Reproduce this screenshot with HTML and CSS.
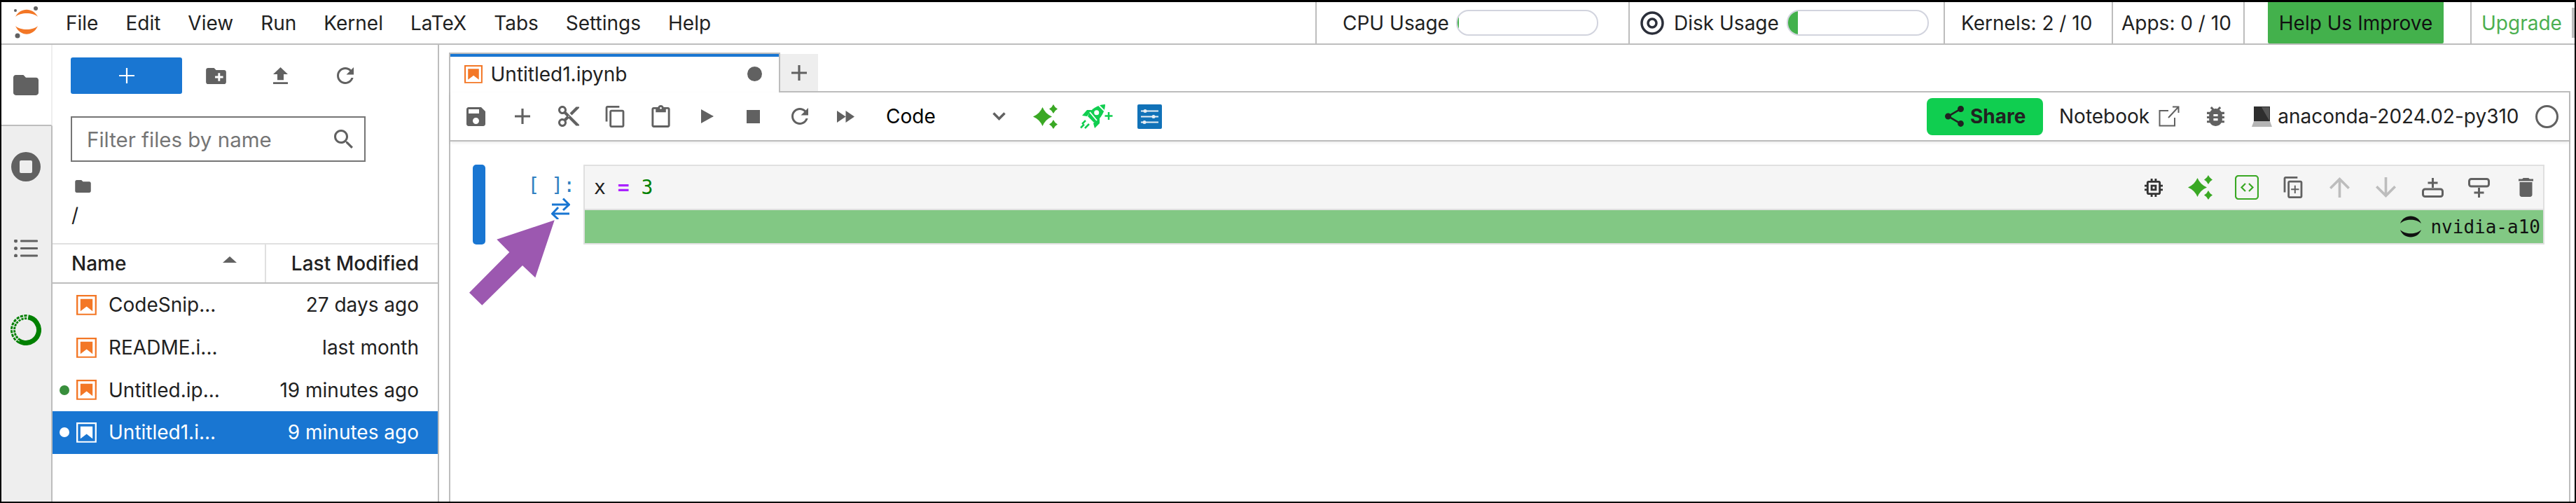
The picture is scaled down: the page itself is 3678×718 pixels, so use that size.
FILE: index.html
```html
<!DOCTYPE html>
<html lang="en">
<head>
<meta charset="utf-8">
<title>JupyterLab</title>
<link rel="stylesheet" href="styles.css">
</head>
<body>
<div class="app">
  <header class="topbar">
    <svg class="logo" viewBox="18 8 44 48"><path class="orange" d="M22 24C29 10.300 47 10.300 54 24C47 17.300 29 17.300 22 24Z"/><path class="orange" d="M22 37C29 52.700 47 52.700 54 37C47 43.700 29 43.700 22 37Z"/><circle class="grey" cx="22" cy="15" r="2"/><circle class="grey" cx="51" cy="12" r="3"/><circle class="grey" cx="25" cy="51" r="3.500"/></svg>
    <nav class="menu"><span>File</span><span>Edit</span><span>View</span><span>Run</span><span>Kernel</span><span>LaTeX</span><span>Tabs</span><span>Settings</span><span>Help</span></nav>
    <div class="status s-cpu"><span>CPU Usage</span><div class="meter"><div class="fill" style="width:2px"></div></div></div>
    <div class="status s-disk"><svg class="disk" viewBox="0 0 34 34"><circle cx="17" cy="17" r="15" /><circle cx="17" cy="17" r="6"/></svg><span>Disk Usage</span><div class="meter"><div class="fill" style="width:14px"></div></div></div>
    <div class="status s-kern"><span>Kernels: 2 / 10</span></div>
    <div class="status s-apps"><span>Apps: 0 / 10</span></div>
    <div class="status s-help"><span class="help-btn">Help Us Improve</span></div>
    <div class="status s-up"><span class="upgrade">Upgrade</span><i class="scroll"></i></div>
  </header>
  <div class="workspace">
    <aside class="rail">
      <div class="rail-tab active"><svg class="r-folder" viewBox="2 4 20 16"><path d="M10 4H4c-1.100 0-2 .9-2 2v12c0 1.100.9 2 2 2h16c1.100 0 2-.9 2-2V8c0-1.100-.9-2-2-2h-8l-2-2z"/></svg></div>
      <div class="rail-tab"><svg class="r-stop" viewBox="0 0 42 42"><path fill-rule="evenodd" d="M21 0a21 21 0 1 0 0 42a21 21 0 1 0 0-42ZM14 12h14a2 2 0 0 1 2 2v14a2 2 0 0 1-2 2H14a2 2 0 0 1-2-2V14a2 2 0 0 1 2-2Z"/></svg></div>
      <div class="rail-tab"><svg class="r-toc" viewBox="0 0 34 25"><circle cx="2.500" cy="2" r="2.500"/><circle cx="2.500" cy="12.500" r="2.500"/><circle cx="2.500" cy="23" r="2.500"/><rect x="9" y=".5" width="25" height="3" rx="1"/><rect x="9" y="11" width="25" height="3" rx="1"/><rect x="9" y="21.500" width="25" height="3" rx="1"/></svg></div>
      <div class="rail-tab"><svg class="r-ana" viewBox="0 0 44 44"><circle class="ring-solid" cx="22" cy="22" r="18.500" pathLength="100" transform="rotate(-80 22 22)"/><circle class="ring-hatch" cx="22" cy="22" r="18.500" pathLength="100" transform="rotate(120 22 22)"/><circle class="ring-hatch2" cx="22" cy="22" r="18.500" pathLength="100" transform="rotate(120 22 22)"/></svg></div>
    </aside>
    <section class="files">
      <div class="f-tools">
        <div class="new-btn"><svg class="new-plus" viewBox="5 5 14 14"><path d="M19 12.700h-6.300V19h-1.400v-6.300H5v-1.400h6.300V5h1.400v6.300H19z"/></svg></div>
        <div class="f-slot"><svg class="i-newfolder" viewBox="2 4 20 16"><path d="M20 6h-8l-2-2H4c-1.110 0-2 .89-2 2v12c0 1.100.89 2 2 2h16c1.100 0 2-.9 2-2V8c0-1.100-.9-2-2-2zm-1 8h-3v3h-2v-3h-3v-2h3V9h2v3h3v2z"/></svg></div>
        <div class="f-slot"><svg class="i-upload" viewBox="5 3 14 17" preserveAspectRatio="none"><path d="M9 16h6v-6h4l-7-7-7 7h4zm-4 2h14v2H5z"/></svg></div>
        <div class="f-slot"><svg class="i-refresh" viewBox="4 4 16 16"><path d="M17.650 6.350C16.200 4.900 14.210 4 12 4c-4.420 0-7.990 3.580-7.990 8s3.570 8 7.990 8c3.730 0 6.840-2.550 7.730-6h-2.080c-.82 2.330-3.040 4-5.650 4-3.310 0-6-2.690-6-6s2.690-6 6-6c1.660 0 3.140.69 4.220 1.780L13 11h7V4l-2.350 2.350z"/></svg></div>
      </div>
      <div class="filter"><span>Filter files by name</span><svg class="i-search" viewBox="3 3 17.500 17.500"><path d="M15.500 14h-.79l-.28-.27C15.410 12.590 16 11.110 16 9.500 16 5.910 13.090 3 9.500 3S3 5.910 3 9.500 5.910 16 9.500 16c1.610 0 3.090-.59 4.230-1.570l.27.28v.79l5 4.990L20.490 19l-4.990-5zm-6 0C7.010 14 5 11.990 5 9.500S7.010 5 9.500 5 14 7.010 14 9.500 11.990 14 9.500 14z"/></svg></div>
      <div class="crumbs"><svg class="i-crumb" viewBox="2 4 20 16"><path d="M10 4H4c-1.100 0-2 .9-2 2v12c0 1.100.9 2 2 2h16c1.100 0 2-.9 2-2V8c0-1.100-.9-2-2-2h-8l-2-2z"/></svg><div class="slash">/</div></div>
      <div class="f-head"><div class="h-name"><span>Name</span><svg class="caret" viewBox="0 0 20 9"><path d="M10 0l10 9H0z"/></svg></div><div class="h-mod">Last Modified</div></div>
      <div class="f-list">
        <div class="row"><i class="dot none"></i><svg class="nb" viewBox="1.800 1.800 18.400 18.400"><path d="M18.700 3.300v15.400H3.300V3.300h15.400m1.500-1.500H1.800v18.300h18.300l.1-18.300z"/><path d="M16.500 16.500l-5.400-4.300-5.600 4.300v-11h11z"/></svg><span class="r-name">CodeSnip...</span><span class="r-mod">27 days ago</span></div>
        <div class="row"><i class="dot none"></i><svg class="nb" viewBox="1.800 1.800 18.400 18.400"><path d="M18.700 3.300v15.400H3.300V3.300h15.400m1.500-1.500H1.800v18.300h18.300l.1-18.300z"/><path d="M16.500 16.500l-5.400-4.300-5.600 4.300v-11h11z"/></svg><span class="r-name">README.i...</span><span class="r-mod">last month</span></div>
        <div class="row"><i class="dot"></i><svg class="nb" viewBox="1.800 1.800 18.400 18.400"><path d="M18.700 3.300v15.400H3.300V3.300h15.400m1.500-1.500H1.800v18.300h18.300l.1-18.300z"/><path d="M16.500 16.500l-5.400-4.300-5.600 4.300v-11h11z"/></svg><span class="r-name">Untitled.ip...</span><span class="r-mod">19 minutes ago</span></div>
        <div class="row selected"><i class="dot"></i><svg class="nb" viewBox="1.800 1.800 18.400 18.400"><path d="M18.700 3.300v15.400H3.300V3.300h15.400m1.500-1.500H1.800v18.300h18.300l.1-18.300z"/><path d="M16.500 16.500l-5.400-4.300-5.600 4.300v-11h11z"/></svg><span class="r-name">Untitled1.i...</span><span class="r-mod">9 minutes ago</span></div>
      </div>
    </section>
    <main class="main">
      <div class="tabs">
        <div class="tab"><svg class="nb tab-nb" viewBox="1.800 1.800 18.400 18.400"><path d="M18.700 3.300v15.400H3.300V3.300h15.400m1.500-1.500H1.800v18.300h18.300l.1-18.300z"/><path d="M16.500 16.500l-5.400-4.300-5.600 4.300v-11h11z"/></svg><span class="tab-label">Untitled1.ipynb</span><i class="tab-dot"></i></div>
        <div class="tab-add"><svg class="i-plus" viewBox="5 5 14 14"><path d="M19 13h-6v6h-2v-6H5v-2h6V5h2v6h6v2z"/></svg></div>
        <div class="tab-fill"></div>
      </div>
      <div class="panel">
        <div class="nb-tools">
          <div class="t-slot"><svg class="i-27" viewBox="3 3 18 18"><path d="M17 3H5c-1.110 0-2 .9-2 2v14c0 1.100.89 2 2 2h14c1.100 0 2-.9 2-2V7l-4-4zm-5 16c-1.660 0-3-1.340-3-3s1.340-3 3-3 3 1.340 3 3-1.340 3-3 3zm3-10H5V5h10v4z"/></svg></div>
          <div class="t-slot"><svg class="i-plus" viewBox="5 5 14 14"><path d="M19 13h-6v6h-2v-6H5v-2h6V5h2v6h6v2z"/></svg></div>
          <div class="t-slot"><svg class="i-30" viewBox="2 2 20 20"><path d="M9.640 7.640c.23-.5.36-1.050.36-1.640 0-2.210-1.790-4-4-4S2 3.790 2 6s1.790 4 4 4c.59 0 1.140-.13 1.640-.36L10 12l-2.360 2.360C7.140 14.130 6.590 14 6 14c-2.210 0-4 1.790-4 4s1.790 4 4 4 4-1.790 4-4c0-.59-.13-1.140-.36-1.640L12 14l7 7h3v-1L9.640 7.640zM6 8c-1.100 0-2-.89-2-2s.9-2 2-2 2 .89 2 2-.9 2-2 2zm0 12c-1.100 0-2-.89-2-2s.9-2 2-2 2 .89 2 2-.9 2-2 2zm6-7.500c-.28 0-.5-.22-.5-.5s.22-.5.5-.5.5.22.5.5-.22.5-.5.5zM19 3l-6 6 2 2 7-7V3z"/></svg></div>
          <div class="t-slot"><svg class="i-copy" viewBox="2 1 19 22"><path d="M16 1H4c-1.100 0-2 .9-2 2v14h2V3h12V1zm3 4H8c-1.100 0-2 .9-2 2v14c0 1.100.9 2 2 2h11c1.100 0 2-.9 2-2V7c0-1.100-.9-2-2-2zm0 16H8V7h11v14z"/></svg></div>
          <div class="t-slot"><svg class="i-paste" viewBox="3 0 18 22"><path d="M19 2h-4.180C14.400.84 13.300 0 12 0c-1.300 0-2.400.84-2.820 2H5c-1.100 0-2 .9-2 2v16c0 1.100.9 2 2 2h14c1.100 0 2-.9 2-2V4c0-1.100-.9-2-2-2zm-7 0c.55 0 1 .45 1 1s-.45 1-1 1-1-.45-1-1 .45-1 1-1zm7 18H5V4h2v3h10V4h2v16z"/></svg></div>
          <div class="t-slot"><svg class="i-run" viewBox="0 0 18 20"><path d="M0 0l18 10L0 20z"/></svg></div>
          <div class="t-slot"><svg class="i-stop" viewBox="0 0 19 19"><path d="M0 0h19v19H0z"/></svg></div>
          <div class="t-slot"><svg class="i-refresh" viewBox="4 4 16 16"><path d="M17.650 6.350C16.200 4.900 14.210 4 12 4c-4.420 0-7.990 3.580-7.990 8s3.570 8 7.990 8c3.730 0 6.840-2.550 7.730-6h-2.080c-.82 2.330-3.040 4-5.650 4-3.310 0-6-2.690-6-6s2.690-6 6-6c1.660 0 3.140.69 4.220 1.780L13 11h7V4l-2.350 2.350z"/></svg></div>
          <div class="t-slot"><svg class="i-ff" viewBox="0 0 25 17"><path d="M0 0l12.500 8.500L0 17zM12.500 0L25 8.500 12.500 17z"/></svg></div>
          <div class="select"><span>Code</span><svg class="chev" viewBox="0 0 19 12"><path d="M1.500 1.500l8 8 8-8"/></svg></div>
          <svg class="sparkle" viewBox="0 0 35 35"><path d="M13.500 4Q17.500 13.500 27 17.500Q17.500 21.500 13.500 31Q9.500 21.500 0 17.500Q9.500 13.500 13.500 4Z"/><path d="M29 0Q30.800 4.200 35 6.500Q30.800 8.800 29 13Q27.200 8.800 23 6.500Q27.200 4.200 29 0Z"/><path d="M29 22Q30.800 26.200 35 28.500Q30.800 30.800 29 35Q27.200 30.800 23 28.500Q27.200 26.200 29 22Z"/></svg>
          <svg class="rocket" viewBox="0 0 48 35"><path d="M36 0C28 0 20 4 14 11L11 17L20 26L26 22C32 16 36 8 36 0Z"/><path d="M3 16L10 8H17L10 17Z"/><path d="M21 34L28 27V19L19 27Z"/><circle class="hole" cx="23.700" cy="11.700" r="3.500"/><path class="white" d="M27 1.500L34.500 9M14 11L24 23" /><path class="line" d="M1 33.500L6 28.500M7 34L13 28M3 28L8 23"/><path class="line" d="M35.500 16.500h11M41 11v11"/></svg>
          <svg class="tune" viewBox="0 0 35 35"><rect width="35" height="35" rx="2"/><path class="tl" d="M5 9.500H30M5 17.500H30M5 25.500H30"/><circle cx="11" cy="9.500" r="2.500"/><circle cx="23" cy="17.500" r="2.500"/><circle cx="10" cy="25.500" r="2.500"/></svg>
          <div class="share"><svg class="i-share" viewBox="3 2 18 20"><path d="M18 16.080c-.76 0-1.440.3-1.960.77L8.910 12.700c.05-.23.09-.46.09-.7s-.04-.47-.09-.7l7.050-4.110c.54.5 1.250.81 2.040.81 1.660 0 3-1.340 3-3s-1.340-3-3-3-3 1.340-3 3c0 .24.04.47.09.7L8.040 9.810C7.500 9.310 6.790 9 6 9c-1.660 0-3 1.340-3 3s1.340 3 3 3c.79 0 1.500-.31 2.040-.81l7.120 4.160c-.05.21-.08.43-.08.65 0 1.610 1.310 2.920 2.920 2.920 1.610 0 2.920-1.310 2.920-2.920s-1.310-2.920-2.920-2.920z"/></svg><span>Share</span></div>
          <span class="nb-link">Notebook</span>
          <svg class="ext" viewBox="0 0 30 30"><path d="M14 7H1.500V28.500H23V17M14 17L28.500 1.500M20 1.500H28.500V10"/></svg>
          <svg class="bug" viewBox="4 3 16 18"><path d="M20 8h-2.810c-.45-.78-1.070-1.450-1.820-1.960L17 4.410 15.590 3l-2.170 2.170C12.960 5.060 12.490 5 12 5c-.49 0-.96.06-1.410.17L8.410 3 7 4.410l1.620 1.630C7.880 6.550 7.260 7.220 6.810 8H4v2h2.090c-.05.33-.09.66-.09 1v1H4v2h2v1c0 .34.04.67.09 1H4v2h2.810c1.040 1.790 2.970 3 5.190 3s4.150-1.210 5.190-3H20v-2h-2.090c.05-.33.09-.66.09-1v-1h2v-2h-2v-1c0-.34-.04-.67-.09-1H20V8zm-6 8h-4v-2h4v2zm0-4h-4v-2h4v2z"/></svg>
          <svg class="laptop" viewBox="0 0 29 29"><path class="scr" d="M3 0H26V21H3Z"/><path class="sheen" d="M14 1H25V20Z"/><path class="base" d="M3 21H26L29 29H0Z"/></svg>
          <span class="kernel">anaconda-2024.02-py310</span>
          <i class="k-circle"></i>
        </div>
        <div class="cell">
          <div class="collapser"></div>
          <div class="prompt"><span>[ ]:</span><svg class="swap" viewBox="0 0 27 31"><path d="M1 10H25M17 1.500L25.500 10L17 18M26 23H2M10 14L1.500 23L10 31"/></svg></div>
          <div class="cell-body">
            <div class="editor">
              <code class="code">x <b class="op">=</b> <b class="num">3</b></code>
              <div class="cell-tools">
                <div class="c-slot"><svg class="i-chip" viewBox="3 3 18 18"><path d="M15 9H9v6h6V9zm-2 4h-2v-2h2v2zm8-2V9h-2V7c0-1.100-.9-2-2-2h-2V3h-2v2h-2V3H9v2H7c-1.100 0-2 .9-2 2v2H3v2h2v2H3v2h2v2c0 1.100.9 2 2 2h2v2h2v-2h2v2h2v-2h2c1.100 0 2-.9 2-2v-2h2v-2h-2v-2h2zm-4 6H7V7h10v10z"/></svg></div>
                <div class="c-slot"><svg class="sparkle" viewBox="0 0 35 35"><path d="M13.500 4Q17.500 13.500 27 17.500Q17.500 21.500 13.500 31Q9.500 21.500 0 17.500Q9.500 13.500 13.500 4Z"/><path d="M29 0Q30.800 4.200 35 6.500Q30.800 8.800 29 13Q27.200 8.800 23 6.500Q27.200 4.200 29 0Z"/><path d="M29 22Q30.800 26.200 35 28.500Q30.800 30.800 29 35Q27.200 30.800 23 28.500Q27.200 26.200 29 22Z"/></svg></div>
                <div class="c-slot"><svg class="codebox" viewBox="0 0 34 35"><rect x="1" y="1" width="32" height="33" rx="4"/><path d="M15 12L9.500 17.500L15 23M20 12L25.500 17.500L20 23"/></svg></div>
                <div class="c-slot"><svg class="i-copy" viewBox="2 1 19 22"><path d="M16 1H4c-1.100 0-2 .9-2 2v14h2V3h12V1zm3 4H8c-1.100 0-2 .9-2 2v14c0 1.100.9 2 2 2h11c1.100 0 2-.9 2-2V7c0-1.100-.9-2-2-2zm0 16H8V7h11v14zM12.800 10h1.400v3.300h3.300v1.400h-3.300V18h-1.400v-3.300H9.500v-1.400h3.300z"/></svg></div>
                <div class="c-slot disabled"><svg class="i-arrow" viewBox="4 4 16 16"><path d="M4 12l1.410 1.410L11 7.830V20h2V7.830l5.580 5.590L20 12l-8-8-8 8z"/></svg></div>
                <div class="c-slot disabled"><svg class="i-arrow" viewBox="4 4 16 16"><path d="M20 12l-1.410-1.410L13 16.170V4h-2v12.170l-5.580-5.590L4 12l8 8 8-8z"/></svg></div>
                <div class="c-slot"><svg class="i-ins" viewBox="0 0 31 28"><rect class="ins-box" x="1.500" y="16" width="28" height="10.500" rx="3"/><path class="ins-plus" d="M15.500 0v14M8.500 7h14"/></svg></div>
                <div class="c-slot"><svg class="i-ins" viewBox="0 0 31 28"><rect class="ins-box" x="1.500" y="1.500" width="28" height="10.500" rx="3"/><path class="ins-plus" d="M15.500 14v14M8.500 21h14"/></svg></div>
                <div class="c-slot"><svg class="i-trash" viewBox="5 3 14 18"><path d="M6 19c0 1.100.9 2 2 2h8c1.100 0 2-.9 2-2V7H6v12zM19 4h-3.500l-1-1h-5l-1 1H5v2h14V4z"/></svg></div>
              </div>
            </div>
            <div class="output"><svg class="spin" viewBox="0 0 30 31"><path d="M0 11C5 -3 25 -3 30 11C23 4 7 4 0 11Z"/><path d="M0 20C5 34 25 34 30 20C23 27 7 27 0 20Z"/></svg><span>nvidia-a10</span></div>
          </div>
        </div>
      </div>
    </main>
  </div>
  <svg class="pointer" viewBox="670 314 122 122"><path d="M791.700 314.300L709.300 341.700L727.300 360L670 417.700L688.300 435.700L746 379L764.300 396.300Z"/></svg>
</div>
</body>
</html>
```
FILE: styles.css
```css
* { box-sizing: border-box; }
html, body { margin: 0; padding: 0; background: #fff; }
body { font-family: "Inter", "Liberation Sans", sans-serif; color: #212121; font-size: 28px; overflow: hidden; }
svg { display: block; flex: none; fill: #616161; }
.app { position: relative; width: 3678px; height: 718px; border: solid #000; border-width: 3px 2px 2px 2px; display: flex; flex-direction: column; background: #fff; }

/* top bar */
.topbar { height: 61px; flex: none; display: flex; align-items: stretch; border-bottom: 2px solid #bdbdbd; }
.logo { width: 44px; height: 48px; margin: 5px 0 0 16px; }
.logo .orange { fill: #f37726; }
.logo .grey { fill: #616161; }
.menu { display: flex; align-items: center; margin-left: 32px; width: 1784px; }
.menu span { margin-right: 39px; }
.status { display: flex; align-items: center; border-left: 2px solid #bdbdbd; flex: none; }
.s-cpu { width: 447px; padding-left: 37px; }
.s-disk { width: 450px; padding-left: 15px; }
.s-kern { width: 240px; padding-left: 23px; }
.s-apps { width: 188px; padding-left: 12px; }
.s-help { width: 324px; padding-left: 33px; align-items: stretch; }
.s-up { width: 149px; padding-left: 14px; position: relative; }
.meter { width: 203px; height: 37px; margin-left: 10px; border: 2px solid #d2d4de; border-radius: 18px; overflow: hidden; display: flex; flex: none; }
.s-disk .meter { margin-left: 11px; }
.fill { background: #43b14c; height: 100%; }
.disk { width: 34px; height: 34px; margin-right: 14px; fill: none; stroke: #2b2f3a; stroke-width: 3.500; }
.help-btn { width: 251px; background: #43b14c; color: #111; display: flex; align-items: center; justify-content: center; border-radius: 0 0 2px 2px; }
.upgrade { color: #4caf50; }
.scroll { position: absolute; right: 0; top: 8px; width: 4px; height: 43px; background: #bdbdbd; }

/* layout */
.workspace { flex: 1; display: flex; min-height: 0; }
.rail { width: 73px; flex: none; background: #eee; border-right: 2px solid #bdbdbd; display: flex; flex-direction: column; }
.rail-tab { height: 116.500px; flex: none; display: flex; align-items: center; justify-content: center; padding-right: 2px; }
.rail-tab.active { background: #fff; height: 116px; margin-right: -2px; border-bottom: 2px solid #bdbdbd; border-right: 2px solid #eee; padding: 0 2px 0 0; }
.r-folder { width: 36px; height: 29px; }
.r-stop { width: 42px; height: 42px; }
.r-toc { width: 34px; height: 25px; }
.r-ana { width: 44px; height: 44px; fill: none; }
.ring-solid { fill: none; stroke: #008000; stroke-width: 7; stroke-dasharray: 56 44; }
.ring-hatch { fill: none; stroke: #008000; stroke-width: 7; stroke-dasharray: 3.200 1.200 3.200 1.200 3.200 1.200 3.200 1.200 3.200 1.200 3.200 1.200 3.200 1.200 3.200 1.200 3.200 1.200 3.200 60; }
.ring-hatch2 { fill: none; stroke: #eee; stroke-width: 1.200; stroke-dasharray: 44 56; }

/* file browser */
.files { width: 552px; flex: none; border-right: 2px solid #bdbdbd; display: flex; flex-direction: column; }
.f-tools { display: flex; align-items: center; height: 52px; margin: 18px 0 0 26px; }
.new-btn { width: 159px; height: 52px; background: #1976d2; border-radius: 3px; display: flex; align-items: center; justify-content: center; margin-right: 2.500px; }
.new-plus { width: 22px; height: 22px; fill: #fff; }
.f-slot { width: 92px; display: flex; justify-content: center; }
.i-newfolder { width: 29px; height: 23px; }
.i-upload { width: 21px; height: 24px; }
.i-refresh { width: 24px; height: 24px; }
.filter { width: 421px; height: 65px; margin: 32px 0 0 26px; border: 2px solid #757575; display: flex; align-items: center; justify-content: space-between; padding: 0 16px 0 21px; color: #757575; font-size: 29.500px; }
.i-search { width: 27px; height: 27px; }
.crumbs { height: 116px; padding: 26px 0 0 27px; }
.i-crumb { width: 23px; height: 18px; margin-left: 5px; }
.slash { margin-top: 14px; line-height: 36px; height: 36px; }
.f-head { height: 58px; flex: none; display: flex; border-top: 2px solid #e0e0e0; border-bottom: 2px solid #bdbdbd; font-weight: 500; }
.h-name { width: 305px; border-right: 2px solid #e0e0e0; padding: 0 40px 0 27px; display: flex; align-items: center; justify-content: space-between; }
.caret { width: 20px; height: 9px; margin-top: -12px; }
.h-mod { flex: 1; padding-right: 27px; display: flex; align-items: center; justify-content: flex-end; }
.f-list { display: flex; flex-direction: column; }
.row { height: 60.700px; flex: none; display: flex; align-items: center; padding: 0 27px 0 10px; }
.dot { width: 14px; height: 14px; border-radius: 50%; background: #388e3c; margin-right: 10px; flex: none; }
.dot.none { background: transparent; }
.nb { width: 29px; height: 29px; fill: #f37726; margin-right: 17px; }
.r-mod { margin-left: auto; }
.row.selected { background: #1976d2; color: #fff; }
.row.selected .dot { background: #fff; }
.row.selected .nb { fill: #fff; }

/* main */
.main { flex: 1; min-width: 0; padding: 11px 6px 0 14px; display: flex; flex-direction: column; }
.tabs { height: 57px; flex: none; display: flex; }
.tab { width: 473px; border: 2px solid #bdbdbd; border-bottom: 0; border-top: 2px solid #bdbdbd; box-shadow: inset 0 4px 0 #1976d2; display: flex; align-items: center; padding: 2px 24px 0 19.500px; background: #fff; }
.tab-nb { width: 26px; height: 26px; margin-right: 12px; }
.tab-label { flex: 1; }
.tab-dot { width: 21px; height: 21px; border-radius: 50%; background: #616161; flex: none; margin-right: 0; }
.tab-add { width: 54px; margin-top: 2px; background: #eee; border-bottom: 2px solid #bdbdbd; display: flex; align-items: center; justify-content: center; }
.i-plus { width: 22px; height: 22px; }
.tab-fill { flex: 1; border-bottom: 2px solid #bdbdbd; }
.panel { flex: 1; min-height: 0; border: solid #bdbdbd; border-width: 0 2px; margin-right: 0; }
.nb-tools { height: 70px; display: flex; align-items: center; padding: 0 0 0 3.500px; border-bottom: 2px solid #bdbdbd; box-shadow: 0 2px 4px rgba(0,0,0,.08); }
.t-slot { width: 66px; flex: none; display: flex; justify-content: center; }
.i-27 { width: 27px; height: 27px; }
.i-30 { width: 30px; height: 30px; }
.i-copy { width: 28px; height: 31px; }
.i-paste { width: 27px; height: 32px; }
.i-run { width: 18px; height: 20px; }
.i-stop { width: 19px; height: 19px; }
.i-ff { width: 25px; height: 17px; }
.select { width: 171px; flex: none; margin-left: 24.500px; display: flex; align-items: center; justify-content: space-between; color: #000; }
.chev { width: 19px; height: 12px; fill: none; stroke: #616161; stroke-width: 3.500; }
.sparkle { width: 35px; height: 35px; fill: #3aa824; }
.nb-tools .sparkle { margin-left: 39px; }
.rocket { width: 48px; height: 35px; margin-left: 32px; fill: #10ce50; }
.rocket .hole { fill: #fff; }
.rocket .white { fill: none; stroke: #fff; stroke-width: 1.800; }
.rocket .line { fill: none; stroke: #10ce50; stroke-width: 2.500; }
.tune { width: 35px; height: 35px; margin-left: 34px; fill: #1172b8; }
.tune rect { fill: #1172b8; }
.tune circle { fill: #e8eef4; }
.tune .tl { fill: none; stroke: #e8eef4; stroke-width: 2.200; }
.share { width: 166px; height: 53px; flex: none; margin-left: 1092px; background: #10ce50; border-radius: 8px; display: flex; align-items: center; padding-left: 26px; font-weight: 700; }
.i-share { width: 27px; height: 30px; margin-right: 9px; fill: #212121; }
.nb-link { margin-left: 23px; }
.ext { width: 30px; height: 30px; margin-left: 13px; fill: none; stroke: #616161; stroke-width: 2; }
.bug { width: 25px; height: 28px; margin-left: 39px; }
.laptop { width: 29px; height: 29px; margin-left: 39px; }
.laptop .scr { fill: #2e2e2e; }
.laptop .sheen { fill: #555; }
.laptop .base { fill: #b5b5b5; }
.kernel { margin-left: 8px; }
.k-circle { width: 33px; height: 33px; margin-left: 23px; border: 3px solid #616161; border-radius: 50%; flex: none; }

/* cell */
.cell { display: flex; margin: 33px 0 0 32px; height: 114px; }
.collapser { width: 18px; background: #1976d2; border-radius: 5px; flex: none; }
.prompt { width: 140px; flex: none; padding: 13px 12px 0 0; font-family: "DejaVu Sans Mono", monospace; font-size: 28px; color: #307fc1; display: flex; flex-direction: column; align-items: flex-end; line-height: 34px; }
.swap { width: 27px; height: 31px; fill: none; stroke: #1976d2; stroke-width: 3; margin: 0 7px 0 0; }
.cell-body { width: 2800px; flex: none; border: 2px solid #e0e0e0; display: flex; flex-direction: column; }
.editor { height: 63px; flex: none; background: #f5f5f5; border-bottom: 2px solid #e0e0e0; display: flex; align-items: center; justify-content: space-between; padding: 0 7px 0 13px; }
.code { font-family: "DejaVu Sans Mono", monospace; font-size: 28px; color: #212121; }
.code b { font-weight: 400; }
.op { color: #aa22ff; font-weight: 700 !important; }
.num { color: #008000; }
.cell-tools { display: flex; align-items: center; gap: 30.400px; }
.c-slot { width: 36px; display: flex; justify-content: center; }
.c-slot.disabled svg { fill: #bdbdbd; }
.i-chip { width: 26px; height: 26px; fill: #333; }
.codebox { width: 34px; height: 35px; fill: none; stroke: #3aa824; stroke-width: 2.200; }
.i-arrow { width: 29px; height: 29px; }
.i-ins { width: 31px; height: 28px; fill: none; }
.ins-box { fill: none; stroke: #616161; stroke-width: 3; }
.ins-plus { fill: none; stroke: #616161; stroke-width: 3; }
.i-trash { width: 21px; height: 27px; }
.output { flex: 1; background: #82c884; display: flex; align-items: center; justify-content: flex-end; padding-right: 4px; font-family: "DejaVu Sans Mono", monospace; font-size: 26px; color: #111; }
.spin { width: 30px; height: 31px; margin-right: 13px; fill: #111; }

/* annotation arrow drawn over the notebook */
.pointer { position: absolute; left: 668px; top: 311px; width: 122px; height: 122px; fill: #9c58b0; }
```
